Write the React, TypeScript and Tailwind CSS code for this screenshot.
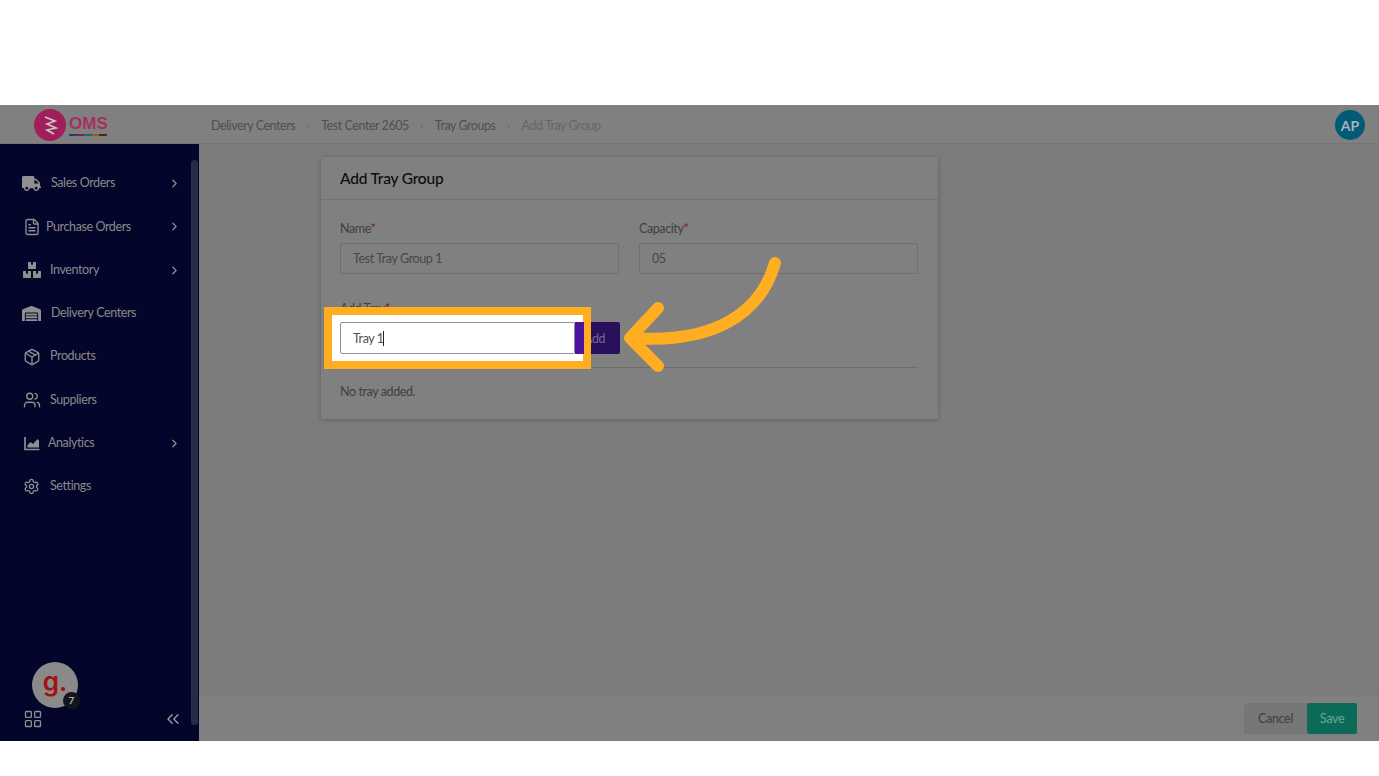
import React from "react";
import { FaTruck, FaWarehouse, FaBoxes } from "react-icons/fa";
import { FileText, Package, Users, Settings, ChevronRight, ChevronsLeft, LayoutGrid } from "lucide-react";

const F = "[font-family:Lato,'Open_Sans',sans-serif]";

function AreaChart() {
  return (
    <svg width="16" height="15" viewBox="0 0 16 15" className="text-[#8f8f8f]">
      <path d="M1 1v12.5h14.5" fill="none" stroke="currentColor" strokeWidth="1.7" />
      <path d="M3.5 11.5V9l3-3 2.5 2 4.5-5 1.5 1.5v7H3.5z" fill="currentColor" />
    </svg>
  );
}

type Item = { label: string; icon: React.ReactNode; chev?: boolean; gap: string };
const ic = "text-[#8f8f8f]";
const items: Item[] = [
  { label: "Sales Orders", icon: <FaTruck size={19} className={ic} />, chev: true, gap: "ml-[10px]" },
  { label: "Purchase Orders", icon: <FileText size={18} strokeWidth={1.8} className={ic} />, chev: true, gap: "ml-[5px]" },
  { label: "Inventory", icon: <FaBoxes size={18} className={ic} />, chev: true, gap: "ml-[9px]" },
  { label: "Delivery Centers", icon: <FaWarehouse size={19} className={ic} />, gap: "ml-[10px]" },
  { label: "Products", icon: <Package size={18} strokeWidth={1.8} className={ic} />, gap: "ml-[9px]" },
  { label: "Suppliers", icon: <Users size={18} strokeWidth={1.8} className={ic} />, gap: "ml-[9px]" },
  { label: "Analytics", icon: <AreaChart />, chev: true, gap: "ml-[7px]" },
  { label: "Settings", icon: <Settings size={17} strokeWidth={1.9} className={ic} />, gap: "ml-[9px]" },
];

function Sidebar() {
  return (
    <aside className="w-[199px] shrink-0 bg-[#03052a] flex">
      <div className="w-[191px] flex flex-col">
        <nav className="pt-[18px] flex flex-col">
          {items.map((it) => (
            <div key={it.label} className="h-[43.3px] flex items-center pl-[22px] pr-[10px]">
              <span className="w-[19px] flex justify-center">{it.icon}</span>
              <span className={`${it.gap} text-[12.5px] tracking-[-0.4px] text-[#8a8a8a] flex-1 whitespace-nowrap`}>{it.label}</span>
              {it.chev && <ChevronRight size={13} strokeWidth={2.2} className="text-[#8f8f8f]" />}
            </div>
          ))}
        </nav>
        <div className="mt-auto pb-[12px] pl-[23px] pr-[8px]">
          <div className="relative w-[46px] h-[46px] ml-[9px] rounded-full bg-[#8a8a8a] flex items-center justify-center">
            <span className="text-[26px] leading-none font-semibold text-[#a31212] -mt-[6px] [font-family:Inter,sans-serif]">g.</span>
            <span className="absolute -right-[2px] -bottom-[1px] w-[17px] h-[17px] rounded-full bg-[#14161e] text-[10px] font-bold text-[#b0b0b0] flex items-center justify-center">7</span>
          </div>
          <div className="flex items-center justify-between mt-[1px]">
            <LayoutGrid size={20} strokeWidth={1.6} className="text-[#8f8f8f]" />
            <ChevronsLeft size={20} strokeWidth={1.7} className="text-[#9a9a9a]" />
          </div>
        </div>
      </div>
      <div className="w-[8px] bg-[#03052a] pt-[16px] pb-[16px]">
        <div className="h-full w-[7px] rounded-[4px] bg-[#292b45]" />
      </div>
    </aside>
  );
}

function Logo() {
  return (
    <div className="w-[211px] shrink-0 flex items-center pl-[34px]">
      <svg width="32" height="32" viewBox="0 0 32 32">
        <circle cx="16" cy="16" r="16" fill="#a01e5c" />
        <path d="M11 8l10 4-8 3 9 4-9 2 7 4" fill="none" stroke="#c9c9c9" strokeWidth="1.6" />
      </svg>
      <div className="ml-[3px] flex flex-col">
        <span className="text-[17px] leading-[17px] font-bold text-[#a3305f] [font-family:'Liberation_Sans',sans-serif]">OMS</span>
        <div className="flex h-[2px] mt-[2px] w-[38px]">
          <span className="flex-1 bg-[#243a7a]" />
          <span className="flex-1 bg-[#7a1f5c]" />
          <span className="flex-1 bg-[#1f6a6a]" />
          <span className="flex-1 bg-[#a3581f]" />
          <span className="flex-1 bg-[#4a2a1f]" />
        </div>
      </div>
    </div>
  );
}

function Header() {
  const crumb = ["Delivery Centers", "Test Center 2605", "Tray Groups"];
  return (
    <header className="h-[39px] shrink-0 bg-[#808080] flex items-center pt-[2px] border-b border-[#767676]">
      <Logo />
      <div className="flex items-center text-[12.5px] tracking-[-0.45px] text-[#4f4f4f] pt-[3px]">
        {crumb.map((c) => (
          <React.Fragment key={c}>
            <span>{c}</span>
            <ChevronRight size={9} className="mx-[8.5px] text-[#5f5f5f]" />
          </React.Fragment>
        ))}
        <span className="text-[#666666]">Add Tray Group</span>
      </div>
      <div className="ml-auto mr-[14px] w-[30px] h-[30px] rounded-full bg-[#005a78] text-[#a9b4bb] text-[14px] font-bold flex items-center justify-center">AP</div>
    </header>
  );
}

function Field({ label, value }: { label: string; value: string }) {
  return (
    <div className="flex-1">
      <div className="pt-[1px] text-[12.5px] tracking-[-0.4px] leading-[18px] text-[#404040]">
        {label}<span className="text-[#7a1a1a]">*</span>
      </div>
      <div className="mt-[5px] h-[31px] border border-[#6f6f6f] rounded-[2px] flex items-center pl-[12px] pt-[2px] text-[12.5px] tracking-[-0.4px] text-[#474747]">{value}</div>
    </div>
  );
}

function Arrow() {
  return (
    <svg className="absolute left-[620px] top-[250px]" width="170" height="130" viewBox="620 250 170 130" fill="none">
      <path d="M775 263C760 315 712 344 631 338M658 308L630 338L658 366" stroke="#ffae21" strokeWidth="12" strokeLinecap="round" strokeLinejoin="round" />
    </svg>
  );
}

function Card() {
  return (
    <section className="ml-[122px] mt-[13px] w-[617px] h-[262px] bg-[#808080] rounded-[2px] shadow-[0_1px_5px_rgba(0,0,0,0.25)]">
      <h1 className="h-[43px] border-b border-[#727272] pl-[19px] pt-[2px] flex items-center text-[15.5px] tracking-[-0.2px] font-medium text-[#0c0c0c]">Add Tray Group</h1>
      <div className="pl-[19px] pr-[20px] pt-[19px]">
        <div className="flex gap-[20px]">
          <Field label="Name" value="Test Tray Group 1" />
          <Field label="Capacity" value="05" />
        </div>
        <div className="mt-[26px] text-[12.5px] tracking-[-0.4px] leading-[18px] text-[#404040]">Add Tray<span className="text-[#7a1a1a]">*</span></div>
        <div className="relative mt-[4px] flex h-[32px]">
          <div className="absolute -left-[16px] -top-[15px] w-[267px] h-[62px] border-[8px] border-[#ffae21] bg-white" />
          <div className="relative w-[235px] h-[32px] bg-white border border-[#8a8fa0] rounded-[2px] flex items-center pl-[12px] text-[12.5px] tracking-[-0.4px] text-[#4f4f4f]">
            <span className="pt-[2px]">Tray 1</span><span className="w-[1.5px] h-[15px] bg-[#222] -ml-[1px] mt-[1px]" />
          </div>
          <div className="relative w-[9px] bg-[#4c12a1]" />
          <div className="w-[36px] bg-[#2a0f5c] rounded-r-[2px] pt-[2px] text-[12.5px] tracking-[-0.4px] text-[#77678f] flex items-center">Add</div>
        </div>
        <div className="mt-[13px] h-px w-[578px] bg-[#6c6c6c]" />
        <p className="mt-[15px] text-[12.5px] tracking-[-0.4px] text-[#3f3f3f]">No tray added.</p>
      </div>
    </section>
  );
}

export default function App() {
  return (
    <div className={`relative w-[1379px] h-[776px] bg-white overflow-hidden flex flex-col ${F}`}>
      <div className="h-[105px] shrink-0 bg-white" />
      <div className="h-[636px] shrink-0 flex flex-col">
        <Header />
        <div className="flex-1 flex min-h-0">
          <Sidebar />
          <main className="flex-1 flex flex-col bg-[#7c7c7c]">
            <div className="flex-1"><Card /></div>
            <footer className="h-[46px] bg-[#808080] border-t border-[#787878] flex items-center justify-end pr-[22px]">
              <div className="w-[63px] h-[31px] pt-[1px] bg-[#757678] rounded-[2px] text-[12.5px] tracking-[-0.3px] text-[#3f3f3f] flex items-center justify-center">Cancel</div>
              <div className="w-[50px] h-[31px] pt-[1px] bg-[#0c6b58] rounded-[2px] text-[12.5px] tracking-[-0.3px] text-[#6fa596] flex items-center justify-center">Save</div>
            </footer>
          </main>
        </div>
      </div>
      <div className="flex-1 bg-white" />
      <Arrow />
    </div>
  );
}
